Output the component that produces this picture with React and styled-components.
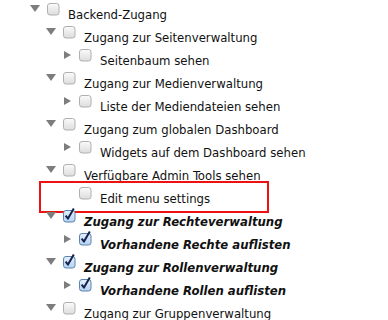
import React from "react";
import styled, { createGlobalStyle } from "styled-components";

const Global = createGlobalStyle`
  body {
    margin: 0;
    background: #fff;
    font-family: "DejaVu Sans Condensed", "DejaVu Sans", Verdana, sans-serif;
  }
`;

const Tree = styled.ul`
  list-style: none;
  margin: 0;
  padding: 3px 0 0 0;
  width: 388px;
  height: 317px;
  overflow: hidden;
`;

const Row = styled.li`
  position: relative;
  display: flex;
  align-items: flex-start;
  height: 23px;
  padding-left: ${(p) => 30 + p.depth * 16}px;
`;

const ArrowSlot = styled.span`
  width: 17px;
  height: 12px;
  flex: none;
  position: relative;
`;

const Down = styled.span`
  position: absolute;
  left: 0;
  top: 2px;
  width: 0;
  height: 0;
  border-left: 5px solid transparent;
  border-right: 5px solid transparent;
  border-top: 7px solid #7d7d7d;
`;

const Right = styled.span`
  position: absolute;
  left: 2px;
  top: 2px;
  width: 0;
  height: 0;
  border-top: 4.5px solid transparent;
  border-bottom: 4.5px solid transparent;
  border-left: 7px solid #7d7d7d;
`;

const Label = styled.span`
  margin-left: 8px;
  padding-top: 4px;
  font-size: 13px;
  line-height: 16px;
  color: #111;
  white-space: nowrap;
  font-weight: ${(p) => (p.checked ? "bold" : "normal")};
  font-style: ${(p) => (p.checked ? "italic" : "normal")};
`;

const Marker = styled.div`
  position: absolute;
  left: 39px;
  top: -6px;
  width: 226px;
  height: 28px;
  border: 2px solid #ee1111;
  pointer-events: none;
`;

const Box = ({ checked }) => (
  <svg width="13" height="13" viewBox="0 0 13 13" style={{ flex: "none", overflow: "visible" }}>
    <defs>
      <linearGradient id="ug" x1="0" y1="0" x2="0" y2="1">
        <stop offset="0" stopColor="#fbfbfb" />
        <stop offset="1" stopColor="#dcdcdc" />
      </linearGradient>
      <linearGradient id="cg" x1="0" y1="0" x2="0" y2="1">
        <stop offset="0" stopColor="#e6f1fc" />
        <stop offset="1" stopColor="#b3d2f2" />
      </linearGradient>
    </defs>
    {checked ? (
      <>
        <rect x="0.5" y="0.5" width="11.5" height="11.5" rx="2.5" fill="url(#cg)" stroke="#5e82ad" />
        <path d="M2.6 5.6 L5 8.6 L10.8 -1.6" fill="none" stroke="#14244f" strokeWidth="2" strokeLinejoin="round" />
      </>
    ) : (
      <rect x="0.5" y="0.5" width="11.5" height="11.5" rx="2.5" fill="url(#ug)" stroke="#b0b0b0" />
    )}
  </svg>
);

const items = [
  { depth: 0, arrow: "down", text: "Backend-Zugang" },
  { depth: 1, arrow: "down", text: "Zugang zur Seitenverwaltung" },
  { depth: 2, arrow: "right", text: "Seitenbaum sehen" },
  { depth: 1, arrow: "down", text: "Zugang zur Medienverwaltung" },
  { depth: 2, arrow: "right", text: "Liste der Mediendateien sehen" },
  { depth: 1, arrow: "down", text: "Zugang zum globalen Dashboard" },
  { depth: 2, arrow: "right", text: "Widgets auf dem Dashboard sehen" },
  { depth: 1, arrow: "down", text: "Verfügbare Admin Tools sehen" },
  { depth: 2, arrow: null, text: "Edit menu settings", marked: true },
  { depth: 1, arrow: "down", text: "Zugang zur Rechteverwaltung", checked: true },
  { depth: 2, arrow: "right", text: "Vorhandene Rechte auflisten", checked: true },
  { depth: 1, arrow: "down", text: "Zugang zur Rollenverwaltung", checked: true },
  { depth: 2, arrow: "right", text: "Vorhandene Rollen auflisten", checked: true },
  { depth: 1, arrow: "down", text: "Zugang zur Gruppenverwaltung" },
];

export default function App() {
  return (
    <>
      <Global />
      <Tree>
        {items.map((it, i) => (
          <Row key={i} depth={it.depth}>
            <ArrowSlot>
              {it.arrow === "down" && <Down />}
              {it.arrow === "right" && <Right />}
            </ArrowSlot>
            <Box checked={it.checked} />
            <Label checked={it.checked}>{it.text}</Label>
            {it.marked && <Marker />}
          </Row>
        ))}
      </Tree>
    </>
  );
}
